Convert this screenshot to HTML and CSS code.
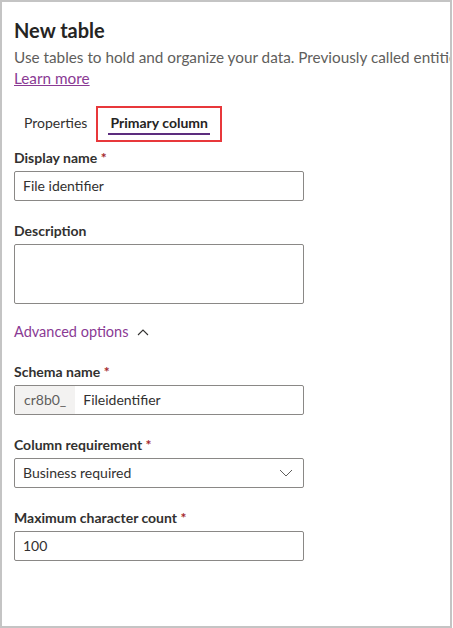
FILE: index.html
```html
<!DOCTYPE html>
<html>
<head>
<meta charset="utf-8">
<link rel="stylesheet" href="styles.css">
</head>
<body>
<div class="panel">
  <h1 class="title">New table</h1>
  <p class="subtitle">Use tables to hold and organize your data. Previously called entities.</p>
  <a class="learn" href="#">Learn more</a>
  <div class="tabs">
    <div class="tab">Properties</div>
    <div class="tab active-wrap"><span class="tab-active">Primary column</span></div>
  </div>
  <div class="field">
    <label class="label">Display name <span class="req">*</span></label>
    <div class="input">File identifier</div>
  </div>
  <div class="field">
    <label class="label">Description</label>
    <div class="input textarea"></div>
  </div>
  <div class="advanced">Advanced options
    <svg class="chev" width="12" height="8" viewBox="0 0 12 8"><path d="M1 7 L6 2 L11 7" fill="none" stroke="#323130" stroke-width="1.1"/></svg>
  </div>
  <div class="field">
    <label class="label">Schema name <span class="req">*</span></label>
    <div class="input prefixed"><span class="prefix">cr8b0_</span><span class="pval">Fileidentifier</span></div>
  </div>
  <div class="field">
    <label class="label">Column requirement <span class="req">*</span></label>
    <div class="input select"><span>Business required</span>
      <svg width="14" height="8" viewBox="0 0 14 8"><path d="M1 1 L7 7 L13 1" fill="none" stroke="#605e5c" stroke-width="1"/></svg>
    </div>
  </div>
  <div class="field">
    <label class="label">Maximum character count <span class="req">*</span></label>
    <div class="input">100</div>
  </div>
</div>
</body>
</html>
```

FILE: styles.css
```css
html, body {
  margin: 0;
  padding: 0;
  background: #fff;
}
body {
  font-family: "Lato", "Noto Sans", sans-serif;
  color: #323130;
}
.panel {
  box-sizing: border-box;
  width: 452px;
  height: 628px;
  border: 2px solid #c4c4c4;
  overflow: hidden;
  padding: 14px 0 0 12px;
}
.title {
  margin: 0;
  font-size: 20px;
  font-weight: 700;
  line-height: 28px;
  color: #252423;
}
.subtitle {
  margin: 3px 0 0;
  font-size: 15.3px;
  line-height: 20px;
  color: #605e5c;
  white-space: nowrap;
}
.learn {
  display: inline-block;
  font-size: 15.3px;
  line-height: 22px;
  color: #8a3a94;
  text-decoration: underline;
}
.tabs {
  display: flex;
  margin-top: 17px;
  height: 36px;
}
.tab {
  font-size: 14px;
  line-height: 20px;
  color: #323130;
  padding: 7px 9px 0 10px;
}
.active-wrap {
  box-sizing: border-box;
  width: 126px;
  height: 36px;
  border: 2px solid #e8383b;
  padding: 5px 0 0 10px;
}
.tab-active {
  font-weight: 700;
  color: #252423;
  display: inline-block;
  border-bottom: 2px solid #5c2d7e;
  padding: 0 2px 1px;
  line-height: 18px;
}
.field {
  margin-top: 20px;
  width: 290px;
}
.tabs + .field {
  margin-top: 6px;
}
.label {
  display: block;
  font-size: 14px;
  font-weight: 700;
  line-height: 20px;
  color: #323130;
  margin-bottom: 3px;
}
.req {
  color: #a4262c;
}
.input {
  box-sizing: border-box;
  height: 30px;
  border: 1px solid #8a8886;
  border-radius: 2px;
  font-size: 14px;
  line-height: 28px;
  padding: 0 8px;
  color: #323130;
}
.textarea {
  height: 60px;
}
.advanced {
  margin-top: 18px;
  font-size: 14.5px;
  line-height: 20px;
  color: #8a3a94;
  display: flex;
  align-items: center;
  gap: 9px;
}
.prefixed {
  display: flex;
  padding: 0;
}
.prefix {
  background: #f3f2f1;
  color: #605e5c;
  padding: 0 9px;
}
.pval {
  padding-left: 8px;
}
.select {
  display: flex;
  justify-content: space-between;
  align-items: center;
}
.select svg {
  margin-right: 2px;
}
```
